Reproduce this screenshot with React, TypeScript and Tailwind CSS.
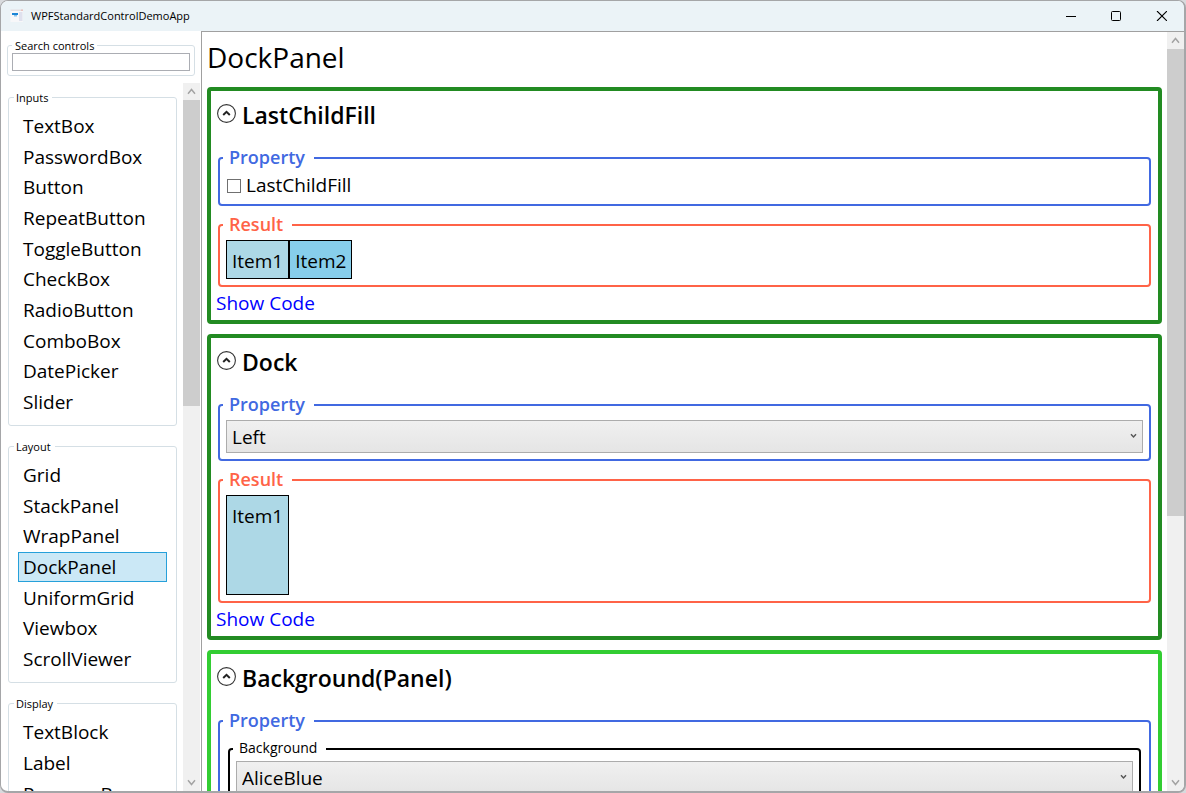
import { useState, type ReactNode } from "react";

const groups = [
  {
    title: "Inputs",
    listHeight: "h-[306px]",
    items: ["TextBox", "PasswordBox", "Button", "RepeatButton", "ToggleButton", "CheckBox", "RadioButton", "ComboBox", "DatePicker", "Slider"],
  },
  {
    title: "Layout",
    listHeight: "h-[214px]",
    items: ["Grid", "StackPanel", "WrapPanel", "DockPanel", "UniformGrid", "Viewbox", "ScrollViewer"],
  },
  {
    title: "Display",
    listHeight: "h-[92px]",
    items: ["TextBlock", "Label", "ProgressBar"],
  },
];

function ScrollBar({ thumb }: { thumb: string }) {
  return (
    <div className="flex w-[17px] shrink-0 flex-col bg-[#f0f0f0]">
      <button aria-label="Scroll up" className="flex h-[17px] shrink-0 items-center justify-center">
        <svg width="9" height="7" viewBox="0 0 9 7" fill="none" stroke="#a3a3a3" strokeWidth="1.5">
          <path d="M1 5.7 4.5 1.5 8 5.7" />
        </svg>
      </button>
      <div className="min-h-0 flex-1">
        <div className={"bg-[#cdcdcd] " + thumb} />
      </div>
      <button aria-label="Scroll down" className="flex h-[17px] shrink-0 items-center justify-center">
        <svg width="9" height="7" viewBox="0 0 9 7" fill="none" stroke="#a3a3a3" strokeWidth="1.5">
          <path d="M1 1.3 4.5 5.5 8 1.3" />
        </svg>
      </button>
    </div>
  );
}

function Section({ title, border, children }: { title: string; border: string; children: ReactNode }) {
  return (
    <section className={"rounded-[4px] border-4 px-[5px] pb-1 " + border}>
      <h2 className="flex h-12 items-center gap-[6px] pl-px text-[23px] font-semibold">
        <button aria-label={"Collapse " + title} className="shrink-0 pb-[3px]">
          <svg className="block" width="19" height="19" viewBox="0 0 19 19" fill="none">
            <circle cx="9.5" cy="9.5" r="8.9" stroke="#333" strokeWidth="1.1" />
            <path d="M6.2 11 9.5 7.8l3.3 3.2" stroke="#222" strokeWidth="2" />
          </svg>
        </button>
        {title}
      </h2>
      <div className="flex flex-col gap-[6px] px-[2px] pt-[6px]">{children}</div>
    </section>
  );
}

function Group({ title, tone, children }: { title: string; tone: string; children: ReactNode }) {
  return (
    <fieldset className={"min-w-0 rounded-[4px] border-2 px-[3px] " + tone}>
      <legend className="pr-[9px] pb-[2px] pl-[6px] text-[18px] leading-[24px] font-semibold">{title}</legend>
      <div className="px-[3px] pt-[2px] pb-[6px] text-black">{children}</div>
    </fieldset>
  );
}

const blue = "border-[#4169e1] text-[#4169e1]";
const red = "border-[#ff6347] text-[#ff6347]";

function Combo({ label, options }: { label: string; options: string[] }) {
  return (
    <div className="relative">
      <select
        aria-label={label}
        className="block h-[33px] w-full appearance-none rounded-none border border-[#acacac] bg-linear-to-b from-[#f0f0f0] to-[#e5e5e5] px-[5px] text-[19px] leading-[26px]"
      >
        {options.map((o) => (
          <option key={o}>{o}</option>
        ))}
      </select>
      <svg className="pointer-events-none absolute top-[13px] right-[6px]" width="7" height="6" viewBox="0 0 7 6" fill="none" stroke="#555" strokeWidth="1.4">
        <path d="M1 1.2 3.5 4 6 1.2" />
      </svg>
    </div>
  );
}

function ShowCode() {
  return (
    <a href="#code" className="-mt-[3px] -ml-[2px] self-start text-[19px] leading-[26px] text-[#0000ff]">
      Show Code
    </a>
  );
}

export default function App() {
  const [selected, setSelected] = useState("DockPanel");
  const [fill, setFill] = useState(false);

  return (
    <div className="h-screen bg-[#d8dadd] font-['Open_Sans','Noto_Sans',sans-serif] text-black">
      <div className="flex h-full flex-col overflow-hidden rounded-[8px] border border-r-2 border-b-2 border-[#a5a6a8] bg-white">
        <header className="flex h-[30px] shrink-0 items-center bg-[#ebf3f7]">
          <svg className="ml-[9px] shrink-0" width="14" height="14" viewBox="0 0 14 14">
            <rect x="0.5" y="1" width="12.5" height="12" fill="#f7f7f9" />
            <rect x="0.5" y="0.5" width="12.5" height="1.5" fill="#e3e0e3" />
            <rect x="11" y="0.5" width="2" height="1.5" fill="#e8c4c0" />
            <rect x="9" y="3" width="3.5" height="9" fill="#dfe1ee" />
            <rect x="2" y="4" width="6" height="2" fill="#1c85d6" />
            <rect x="4" y="6" width="3" height="1.5" fill="#8cc3ea" />
          </svg>
          <h1 className="ml-[7px] flex-1 text-[11px]">WPFStandardControlDemoApp</h1>
          <button aria-label="Minimize" className="flex h-full w-[45px] items-center justify-center">
            <svg width="11" height="10" viewBox="0 0 11 10" stroke="#000"><path d="M0 5.5h10" /></svg>
          </button>
          <button aria-label="Maximize" className="flex h-full w-[45px] items-center justify-center">
            <svg width="11" height="10" viewBox="0 0 11 10" fill="none" stroke="#000"><rect x="0.5" y="0.5" width="9" height="9" rx="1" /></svg>
          </button>
          <button aria-label="Close" className="flex h-full w-[45px] items-center justify-center">
            <svg width="11" height="10" viewBox="0 0 11 10" stroke="#000" strokeWidth="1.1"><path d="M1 0l10 10M11 0 1 10" /></svg>
          </button>
        </header>

        <div className="flex min-h-0 flex-1">
          <nav className="flex w-[200px] shrink-0 flex-col">
            <fieldset className="mx-[6px] mt-[6px] min-w-0 rounded-[3px] border border-[#d5dfe5] px-1 pb-1">
              <legend className="px-[3px] pt-px text-[11px] leading-[15px]">
                <label htmlFor="search">Search controls</label>
              </legend>
              <input id="search" className="block h-[18px] w-full border border-[#abadb3] px-1 text-[11px] outline-none" />
            </fieldset>

            <div className="mt-[7px] flex min-h-0 flex-1 pr-px">
              <div className="flex min-w-0 flex-1 flex-col gap-3 overflow-hidden pt-[6px] pr-[6px] pl-[7px]">
                {groups.map((g) => (
                  <fieldset key={g.title} className="min-w-0 shrink-0 rounded-[3px] border border-[#d5dfe5] px-[5px] pb-2">
                    <legend className="pt-px pr-1 pl-[2px] text-[11px] leading-[15px]">{g.title}</legend>
                    <ul className={"box-content flex flex-col justify-between px-1 pt-[6px] " + g.listHeight}>
                      {g.items.map((item) => (
                        <li key={item}>
                          <button
                            onClick={() => setSelected(item)}
                            className={
                              "block h-[30px] w-full border px-1 text-left text-[19px] leading-[28px] " +
                              (item === selected ? "border-[#26a0da] bg-[#cbe8f6]" : "border-transparent")
                            }
                          >
                            {item}
                          </button>
                        </li>
                      ))}
                    </ul>
                  </fieldset>
                ))}
              </div>
              <ScrollBar thumb="h-[306px]" />
            </div>
          </nav>

          <main className="flex min-w-0 flex-1 border-t border-l border-[#a0a0a0]">
            <div className="flex min-w-0 flex-1 flex-col gap-[10px] overflow-hidden px-[5px]">
              <h2 className="h-[45px] shrink-0 pt-[5px] text-[28px] leading-10">DockPanel</h2>

              <Section title="LastChildFill" border="border-[#228b22]">
                <Group title="Property" tone={blue}>
                  <label className="flex h-[25px] items-center gap-[5px] pl-px text-[19px]">
                    <input
                      type="checkbox"
                      checked={fill}
                      onChange={(e) => setFill(e.target.checked)}
                      className="size-[14px] appearance-none border border-[#707070] bg-white checked:bg-[#707070]"
                    />
                    LastChildFill
                  </label>
                </Group>
                <Group title="Result" tone={red}>
                  <div className="flex h-[39px] text-[19px] leading-[26px]">
                    <div className="border border-black bg-[#add8e6] px-[5px] pt-[7px]">Item1</div>
                    <div className="border border-black bg-[#87ceeb] px-[5px] pt-[7px]">Item2</div>
                  </div>
                </Group>
                <ShowCode />
              </Section>

              <Section title="Dock" border="border-[#228b22]">
                <Group title="Property" tone={blue}>
                  <Combo label="Dock" options={["Left", "Top", "Right", "Bottom"]} />
                </Group>
                <Group title="Result" tone={red}>
                  <div className="flex h-[100px] text-[19px] leading-[26px]">
                    <div className="border border-black bg-[#add8e6] px-[5px] pt-[7px]">Item1</div>
                  </div>
                </Group>
                <ShowCode />
              </Section>

              <Section title="Background(Panel)" border="border-[#32cd32]">
                <Group title="Property" tone={blue}>
                  <fieldset className="mx-[2px] mt-[3px] min-w-0 rounded-[4px] border-2 border-black px-[3px]">
                    <legend className="pr-[9px] pb-[2px] pl-[6px] text-[14px] leading-[18px]">Background</legend>
                    <div className="px-[3px] pt-[2px] pb-[6px]">
                      <Combo label="Background" options={["AliceBlue", "AntiqueWhite", "Aqua"]} />
                    </div>
                  </fieldset>
                </Group>
                <ShowCode />
              </Section>
            </div>
            <ScrollBar thumb="h-[467px]" />
          </main>
        </div>
      </div>
    </div>
  );
}
